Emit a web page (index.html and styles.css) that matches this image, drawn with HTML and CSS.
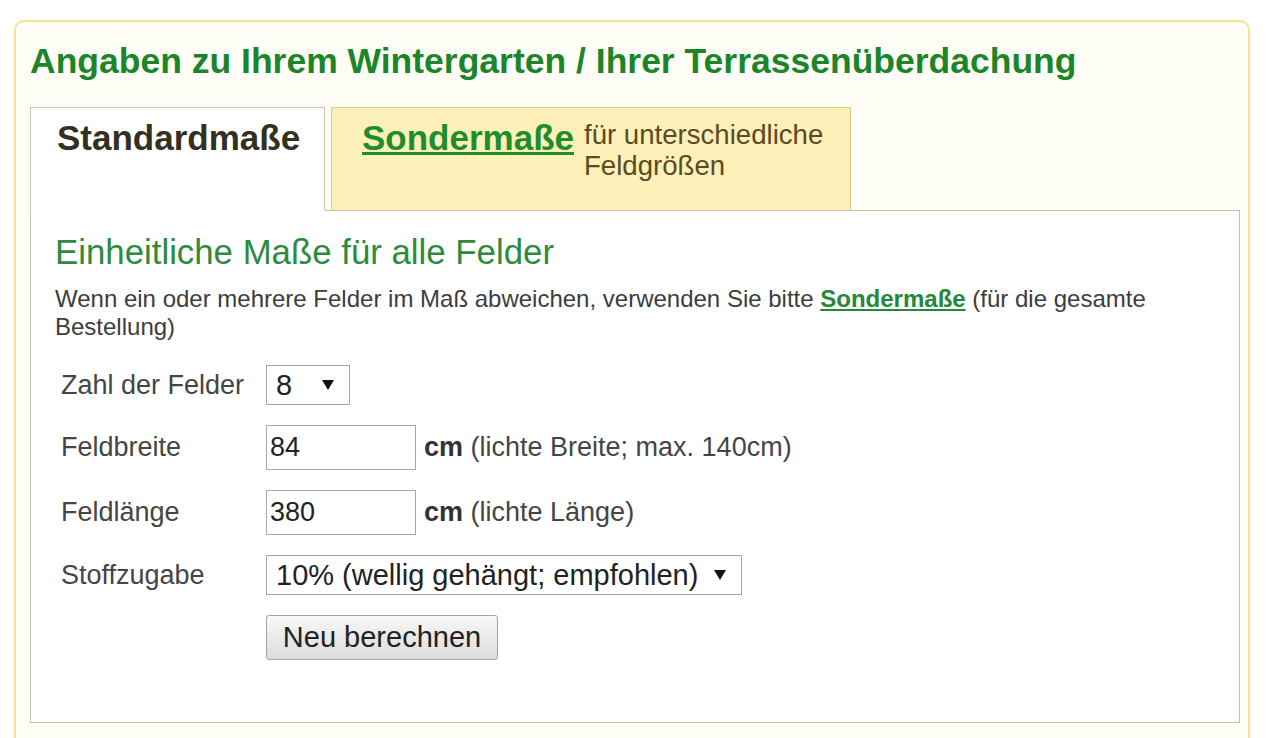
FILE: index.html
```html
<!DOCTYPE html>
<html lang="de">
<head>
<meta charset="utf-8">
<title>Angaben zu Ihrem Wintergarten</title>
<link rel="stylesheet" href="styles.css">
</head>
<body>
<div class="box">
  <h1 class="title">Angaben zu Ihrem Wintergarten / Ihrer Terrassenüberdachung</h1>
  <div class="tabs">
    <div class="tab tab-active">Standardmaße</div>
    <div class="tab tab-other">
      <a href="#" class="tab-link">Sondermaße</a>
      <span class="tab-note">für unterschiedliche<br>Feldgrößen</span>
    </div>
  </div>
  <div class="panel">
    <h2 class="panel-title">Einheitliche Maße für alle Felder</h2>
    <p class="hint"><span>Wenn ein oder mehrere Felder im Maß abweichen, verwenden Sie bitte</span> <a href="#" class="hint-link">Sondermaße</a> <span>(für die gesamte</span> <span>Bestellung)</span></p>
    <div class="form">
      <label class="lbl">Zahl der Felder</label>
      <div class="ctrl">
        <span class="sel">
          <select class="select select-small"><option>8</option></select>
          <svg class="arrow" width="12" height="10" viewBox="0 0 12 10"><path d="M0 0H12L6 10Z" fill="#111"/></svg>
        </span>
      </div>

      <label class="lbl">Feldbreite</label>
      <div class="ctrl">
        <input class="inp" type="text" value="84">
        <span class="unit"><b>cm</b> (lichte Breite; max. 140cm)</span>
      </div>

      <label class="lbl">Feldlänge</label>
      <div class="ctrl">
        <input class="inp" type="text" value="380">
        <span class="unit"><b>cm</b> (lichte Länge)</span>
      </div>

      <label class="lbl">Stoffzugabe</label>
      <div class="ctrl">
        <span class="sel">
          <select class="select select-wide"><option>10% (wellig gehängt; empfohlen)</option></select>
          <svg class="arrow" width="12" height="10" viewBox="0 0 12 10"><path d="M0 0H12L6 10Z" fill="#111"/></svg>
        </span>
      </div>

      <span class="lbl"></span>
      <div class="ctrl">
        <button class="btn" type="button">Neu berechnen</button>
      </div>
    </div>
  </div>
</div>
</body>
</html>
```

FILE: styles.css
```css
html, body {
  margin: 0;
  padding: 0;
  background: #ffffff;
  font-family: "Liberation Sans", Arial, sans-serif;
}

.box {
  margin: 20px 30px 0 14px;
  border: 2px solid #f0e392;
  border-bottom: 0;
  border-radius: 10px 10px 0 0;
  background: #fffef6;
  padding: 19px 8px 15px 14px;
}

.title {
  margin: 0;
  font-size: 35.5px;
  line-height: 40px;
  font-weight: bold;
  color: #1b8529;
}

.tabs {
  display: flex;
  gap: 6px;
  margin-top: 26px;
  margin-bottom: -1px;
  position: relative;
  z-index: 1;
}

.tab {
  box-sizing: border-box;
  height: 104px;
  border: 1px solid #c9c6ae;
}

.tab-active {
  width: 295px;
  background: #ffffff;
  border-bottom-color: #ffffff;
  padding: 10px 0 0 26px;
  font-size: 35px;
  line-height: 40px;
  font-weight: bold;
  color: #33301f;
}

.tab-other {
  width: 520px;
  background: #fdf0b9;
  border-color: #d8cc8e;
  border-bottom-color: #c9c6ae;
  padding: 10px 0 0 30px;
  display: flex;
  align-items: flex-start;
}

.tab-link {
  font-size: 35px;
  line-height: 40px;
  font-weight: bold;
  color: #1f8d2b;
  text-decoration: underline;
}

.tab-note {
  margin: 1px 0 0 10px;
  font-size: 27.6px;
  line-height: 31px;
  color: #5b4b22;
}

.panel {
  border: 1px solid #c4c2a8;
  background: #ffffff;
  padding: 21px 23px 62px 24px;
}

.panel-title {
  margin: 0;
  font-size: 34.8px;
  line-height: 40px;
  font-weight: normal;
  color: #2e8b3e;
}

.hint {
  margin: 13px 0 0 0;
  font-size: 24px;
  line-height: 28px;
  color: #3d3d3d;
}

.hint-link {
  color: #24883a;
  font-weight: bold;
  text-decoration: underline;
}

.form {
  margin-top: 24px;
  padding-left: 6px;
  display: grid;
  grid-template-columns: 205px 1fr;
  row-gap: 20px;
  align-items: center;
}

.lbl {
  font-size: 27px;
  color: #454545;
}

.ctrl {
  display: flex;
  align-items: center;
}

.sel {
  position: relative;
  display: inline-block;
}

.select {
  -webkit-appearance: none;
  appearance: none;
  box-sizing: border-box;
  height: 40px;
  border: 1px solid #a6a6a6;
  border-radius: 0;
  background: #ffffff;
  font-family: "Liberation Sans", Arial, sans-serif;
  font-size: 29px;
  color: #222222;
  padding: 0 0 0 9px;
  margin: 0;
  display: block;
}

.select-small {
  width: 84px;
}

.select-wide {
  width: 476px;
}

.arrow {
  position: absolute;
  right: 16px;
  top: 15px;
  pointer-events: none;
}

.inp {
  box-sizing: border-box;
  width: 150px;
  height: 45px;
  border: 1px solid #a9a9a9;
  border-radius: 0;
  margin: 0;
  padding: 0 0 0 3px;
  font-family: "Liberation Sans", Arial, sans-serif;
  font-size: 27px;
  color: #222222;
  background: #ffffff;
}

.unit {
  margin-left: 8px;
  font-size: 27px;
  color: #454545;
}

.unit b {
  color: #333333;
}

.btn {
  box-sizing: border-box;
  width: 232px;
  height: 45px;
  margin: 0;
  padding: 0;
  border: 1px solid #a4a4a4;
  border-radius: 3px;
  background: linear-gradient(#f8f8f8, #dcdcdc);
  font-family: "Liberation Sans", Arial, sans-serif;
  font-size: 29px;
  color: #222222;
}
```
